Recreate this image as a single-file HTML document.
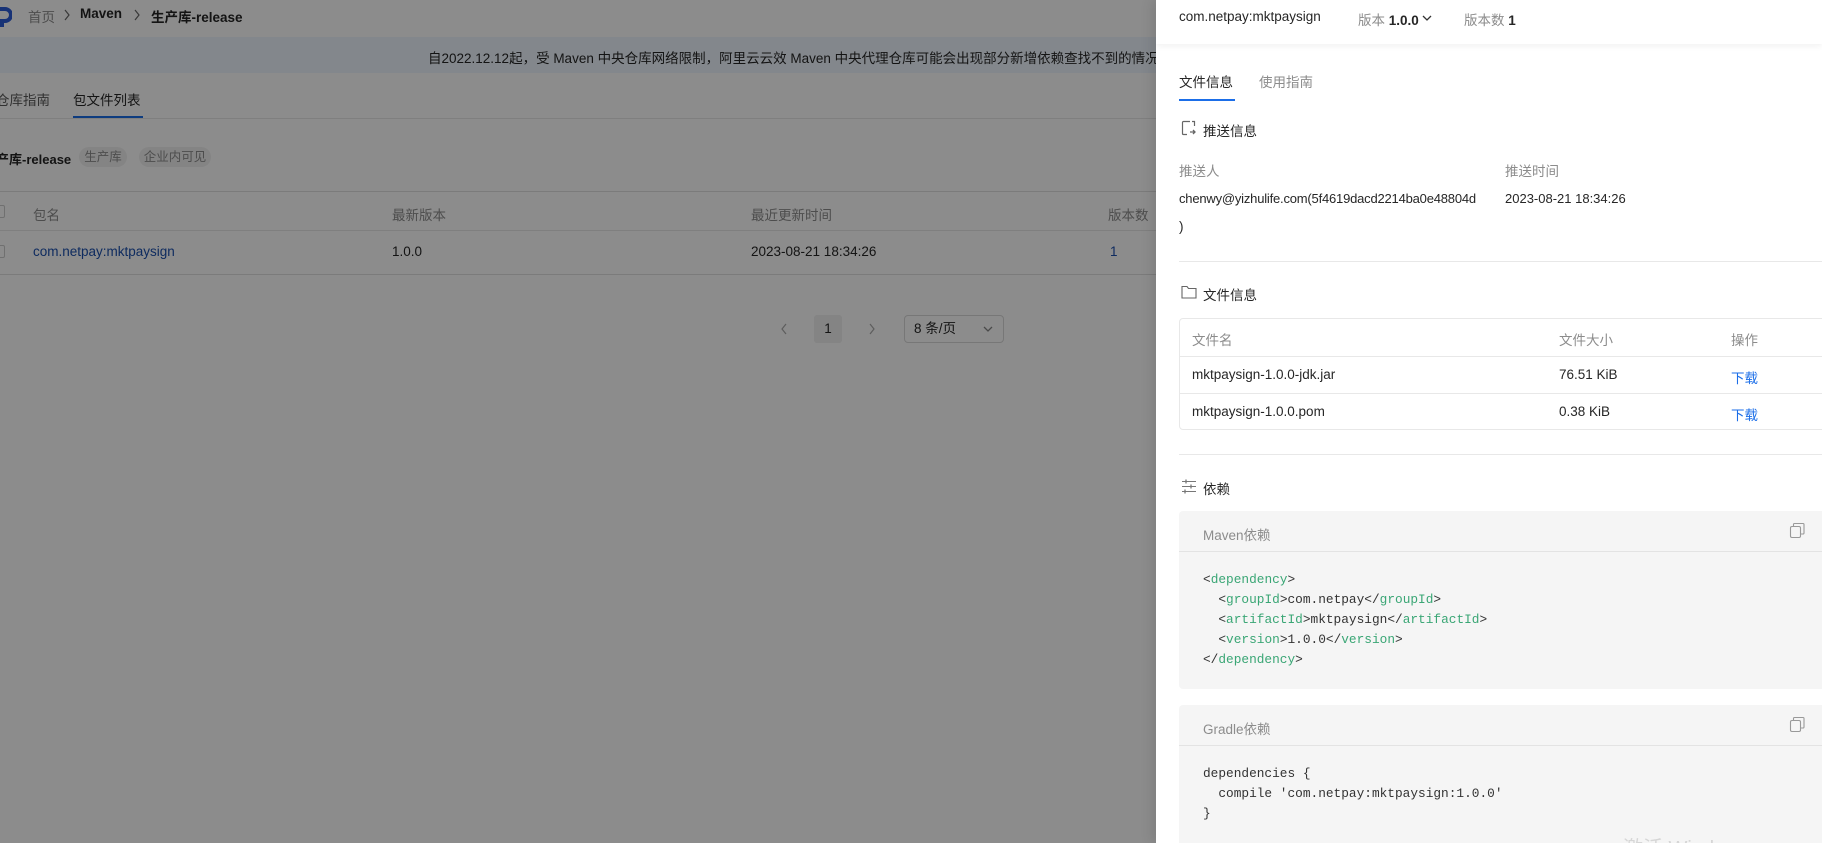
<!DOCTYPE html>
<html style="overflow:hidden;width:1822px;height:843px"><head><meta charset="utf-8">
<style>
*{margin:0;padding:0;box-sizing:border-box}
body{width:1822px;height:843px;overflow:hidden;position:relative;background:#fff;font-family:"Liberation Sans","Noto Sans CJK SC",sans-serif;font-size:13.5px;color:#262626}
.a{position:absolute;white-space:nowrap}
#overlay{position:absolute;left:0;top:0;width:1156px;height:843px;background:rgba(0,0,0,0.45)}
.hl{position:absolute;height:1px;background:#e8e8e8}
.mono{font-family:"Liberation Mono","Noto Sans CJK SC",monospace;font-size:12.8px}
.g{color:#3aa675}
</style></head><body>
<div class="a" style="left:0;top:0;width:1156px;height:843px;background:#fff;overflow:hidden">
 <svg class="a" style="left:0;top:6px" width="12" height="22" viewBox="0 0 12 22"><path d="M0 3 H5 A6 6 0 0 1 5 15 H2 V21" fill="none" stroke="#2a5bd7" stroke-width="4"/></svg>
 <div class="a" style="left:28px;top:6px;color:#8c8c8c">首页</div>
 <svg class="a" style="left:63px;top:9px" width="8" height="12" viewBox="0 0 8 12"><path d="M2 1 L6 6 L2 11" fill="none" stroke="#666" stroke-width="1.2"/></svg>
 <div class="a" style="left:80px;top:6px;color:#262626;font-weight:bold">Maven</div>
 <svg class="a" style="left:133px;top:9px" width="8" height="12" viewBox="0 0 8 12"><path d="M2 1 L6 6 L2 11" fill="none" stroke="#666" stroke-width="1.2"/></svg>
 <div class="a" style="left:151px;top:6px;color:#262626;font-weight:bold">生产库-release</div>
 <div class="a" style="left:0;top:37px;width:1156px;height:36px;background:#eef6ff"></div>
 <div class="a" style="left:428px;top:47px;color:#262626">自2022.12.12起，受 Maven 中央仓库网络限制，阿里云云效 Maven 中央代理仓库可能会出现部分新增依赖查找不到的情况</div>
 <div class="a" style="left:-4px;top:89px;color:#595959">仓库指南</div>
 <div class="a" style="left:73px;top:89px;color:#262626">包文件列表</div>
 <div class="a" style="left:73px;top:116px;width:70px;height:2px;background:#1b6ee8"></div>
 <div class="hl" style="left:0;top:118px;width:1156px"></div>
 <div class="a" style="left:-4px;top:149px;font-weight:bold;font-size:13px">产库-release</div>
 <div class="a" style="left:79px;top:147px;width:48px;height:20px;border-radius:10px;background:#f0f0f0;color:#8c8c8c;font-size:12.5px;line-height:20px;text-align:center">生产库</div>
 <div class="a" style="left:139px;top:147px;width:72px;height:20px;border-radius:10px;background:#f0f0f0;color:#8c8c8c;font-size:12.5px;line-height:20px;text-align:center">企业内可见</div>
 <div class="hl" style="left:0;top:191px;width:1156px;background:#e0e0e0"></div>
 <div class="a" style="left:-8px;top:205px;width:13px;height:13px;border:1px solid #ccc;border-radius:2px"></div>
 <div class="a" style="left:33px;top:204px;color:#8c8c8c">包名</div>
 <div class="a" style="left:392px;top:204px;color:#8c8c8c">最新版本</div>
 <div class="a" style="left:751px;top:204px;color:#8c8c8c">最近更新时间</div>
 <div class="a" style="left:1108px;top:204px;color:#8c8c8c">版本数</div>
 <div class="hl" style="left:0;top:230px;width:1156px"></div>
 <div class="a" style="left:-8px;top:245px;width:13px;height:13px;border:1px solid #ccc;border-radius:2px"></div>
 <div class="a" style="left:33px;top:244px;color:#1b4fae">com.netpay:mktpaysign</div>
 <div class="a" style="left:392px;top:244px">1.0.0</div>
 <div class="a" style="left:751px;top:244px">2023-08-21 18:34:26</div>
 <div class="a" style="left:1110px;top:244px;color:#1b4fae">1</div>
 <div class="hl" style="left:0;top:274px;width:1156px;background:#e0e0e0"></div>
 <svg class="a" style="left:780px;top:323px" width="8" height="12" viewBox="0 0 8 12"><path d="M6 1 L2 6 L6 11" fill="none" stroke="#aaa" stroke-width="1.2"/></svg>
 <div class="a" style="left:814px;top:315px;width:28px;height:28px;background:#f0f0f0;border-radius:3px;line-height:28px;text-align:center">1</div>
 <svg class="a" style="left:868px;top:323px" width="8" height="12" viewBox="0 0 8 12"><path d="M2 1 L6 6 L2 11" fill="none" stroke="#aaa" stroke-width="1.2"/></svg>
 <div class="a" style="left:904px;top:315px;width:100px;height:28px;border:1px solid #d9d9d9;border-radius:4px;line-height:26px;padding-left:9px">8 条/页</div>
 <svg class="a" style="left:982px;top:325px" width="12" height="8" viewBox="0 0 12 8"><path d="M2 2 L6 6 L10 2" fill="none" stroke="#888" stroke-width="1.3"/></svg>
</div>
<div id="overlay"></div>
<div class="a" style="left:1156px;top:0;width:666px;height:843px;background:#fff;box-shadow:-4px 0 12px rgba(0,0,0,0.1);overflow:hidden">
 <div class="a" style="left:0;top:0;width:666px;height:44px;box-shadow:0 2px 6px rgba(0,0,0,0.06)"></div>
 <div class="a" style="left:23px;top:9px;color:#262626">com.netpay:mktpaysign</div>
 <div class="a" style="left:202px;top:9px;color:#8c8c8c">版本 <b style="color:#262626">1.0.0</b></div>
 <svg class="a" style="left:266px;top:14px" width="10" height="8" viewBox="0 0 10 8"><path d="M1 2 L5 6 L9 2" fill="none" stroke="#333" stroke-width="1.3"/></svg>
 <div class="a" style="left:308px;top:9px;color:#8c8c8c">版本数 <b style="color:#262626">1</b></div>
 <div class="a" style="left:23px;top:71px">文件信息</div>
 <div class="a" style="left:103px;top:71px;color:#8c8c8c">使用指南</div>
 <div class="a" style="left:23px;top:99px;width:56px;height:2px;background:#1b6ee8"></div>
 <svg class="a" style="left:25px;top:120px" width="16" height="16" viewBox="0 0 16 16"><path d="M9 1.5 H2.5 A1 1 0 0 0 1.5 2.5 V13.5 A1 1 0 0 0 2.5 14.5 H6 M13.5 6 V1.5 H11" fill="none" stroke="#666" stroke-width="1.2"/><path d="M9 12 H14 M12 10 L14 12 L12 14" fill="none" stroke="#666" stroke-width="1.3"/></svg>
 <div class="a" style="left:47px;top:120px">推送信息</div>
 <div class="a" style="left:23px;top:160px;color:#8c8c8c">推送人</div>
 <div class="a" style="left:349px;top:160px;color:#8c8c8c">推送时间</div>
 <div class="a" style="left:23px;top:191px;font-size:13px;letter-spacing:-0.2px">chenwy@yizhulife.com(5f4619dacd2214ba0e48804d</div>
 <div class="a" style="left:349px;top:191px;font-size:13px">2023-08-21 18:34:26</div>
 <div class="a" style="left:23px;top:219px">)</div>
 <div class="hl" style="left:23px;top:261px;width:643px"></div>
 <svg class="a" style="left:25px;top:285px" width="16" height="14" viewBox="0 0 16 14"><path d="M1 1.5 H6 L7.5 3.5 H15 V13 H1 Z" fill="none" stroke="#666" stroke-width="1.1"/></svg>
 <div class="a" style="left:47px;top:284px">文件信息</div>
 <div class="a" style="left:23px;top:318px;width:660px;height:112px;border:1px solid #e8e8e8;border-radius:4px"></div>
 <div class="a" style="left:36px;top:329px;color:#8c8c8c">文件名</div>
 <div class="a" style="left:403px;top:329px;color:#8c8c8c">文件大小</div>
 <div class="a" style="left:575px;top:329px;color:#8c8c8c">操作</div>
 <div class="hl" style="left:24px;top:356px;width:642px"></div>
 <div class="a" style="left:36px;top:367px">mktpaysign-1.0.0-jdk.jar</div>
 <div class="a" style="left:403px;top:367px">76.51 KiB</div>
 <div class="a" style="left:575px;top:367px;color:#1b6ee8">下载</div>
 <div class="hl" style="left:24px;top:393px;width:642px"></div>
 <div class="a" style="left:36px;top:404px">mktpaysign-1.0.0.pom</div>
 <div class="a" style="left:403px;top:404px">0.38 KiB</div>
 <div class="a" style="left:575px;top:404px;color:#1b6ee8">下载</div>
 <div class="hl" style="left:23px;top:454px;width:643px"></div>
 <svg class="a" style="left:25px;top:479px" width="16" height="15" viewBox="0 0 16 15"><path d="M1 2.5 H15 M1 7.5 H15 M1 12.5 H15" stroke="#777" stroke-width="1.1"/><path d="M5 0.5 V4.5 M10 5.5 V9.5 M4 10.5 V14.5" stroke="#777" stroke-width="1.3"/></svg>
 <div class="a" style="left:47px;top:478px">依赖</div>
 <div class="a" style="left:23px;top:511px;width:643px;height:178px;background:#f5f5f5;border-radius:4px 0 0 4px"></div>
 <div class="hl" style="left:23px;top:551px;width:643px;background:#e3e3e3"></div>
 <div class="a" style="left:47px;top:524px;color:#8c8c8c">Maven依赖</div>
 <svg class="a" style="left:633px;top:522px" width="17" height="17" viewBox="0 0 17 17"><rect x="1.5" y="4.5" width="10" height="11" rx="1.5" fill="none" stroke="#999" stroke-width="1.1"/><path d="M4.5 4.5 V2.5 A1 1 0 0 1 5.5 1.5 H14 A1 1 0 0 1 15 2.5 V11 A1 1 0 0 1 14 12 H11.5" fill="none" stroke="#999" stroke-width="1.1"/></svg>
 <div class="a mono" style="left:47px;top:570px;line-height:20px;color:#333">&lt;<span class="g">dependency</span>&gt;<br>&nbsp;&nbsp;&lt;<span class="g">groupId</span>&gt;com.netpay&lt;/<span class="g">groupId</span>&gt;<br>&nbsp;&nbsp;&lt;<span class="g">artifactId</span>&gt;mktpaysign&lt;/<span class="g">artifactId</span>&gt;<br>&nbsp;&nbsp;&lt;<span class="g">version</span>&gt;1.0.0&lt;/<span class="g">version</span>&gt;<br>&lt;/<span class="g">dependency</span>&gt;</div>
 <div class="a" style="left:23px;top:705px;width:643px;height:138px;background:#f5f5f5;border-radius:4px 0 0 0"></div>
 <div class="hl" style="left:23px;top:745px;width:643px;background:#e3e3e3"></div>
 <div class="a" style="left:47px;top:718px;color:#8c8c8c">Gradle依赖</div>
 <svg class="a" style="left:633px;top:716px" width="17" height="17" viewBox="0 0 17 17"><rect x="1.5" y="4.5" width="10" height="11" rx="1.5" fill="none" stroke="#999" stroke-width="1.1"/><path d="M4.5 4.5 V2.5 A1 1 0 0 1 5.5 1.5 H14 A1 1 0 0 1 15 2.5 V11 A1 1 0 0 1 14 12 H11.5" fill="none" stroke="#999" stroke-width="1.1"/></svg>
 <div class="a mono" style="left:47px;top:764px;line-height:20px;color:#333">dependencies {<br>&nbsp;&nbsp;compile 'com.netpay:mktpaysign:1.0.0'<br>}</div>
 <div class="a" style="left:467px;top:832px;color:#d6d6d6;font-size:20px">激活 Windows</div>
</div>
</body></html>
